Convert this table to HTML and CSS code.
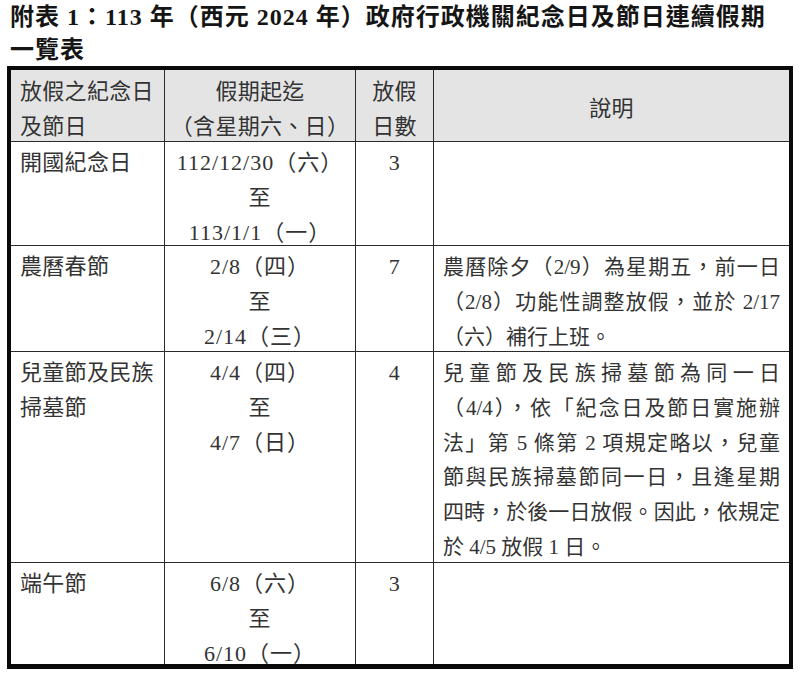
FILE: index.html
```html
<!DOCTYPE html>
<html lang="zh-Hant">
<head>
<meta charset="utf-8">
<title>附表1</title>
<link rel="stylesheet" href="styles.css">
</head>
<body>
<h1 class="title">附表 1：113 年（西元 2024 年）政府行政機關紀念日及節日連續假期<br>一覽表</h1>
<div class="sheet">
  <div class="cell head left">放假之紀念日<br>及節日</div>
  <div class="cell head center">假期起迄<br>（含星期六、日）</div>
  <div class="cell head center">放假<br>日數</div>
  <div class="cell head mid">說明</div>

  <div class="cell left">開國紀念日</div>
  <div class="cell center date">112/12/30（六）<br>至<br>113/1/1（一）</div>
  <div class="cell center">3</div>
  <div class="cell desc"></div>

  <div class="cell left">農曆春節</div>
  <div class="cell center date">2/8（四）<br>至<br>2/14（三）</div>
  <div class="cell center">7</div>
  <div class="cell desc">
    <span class="line just">農曆除夕（2/9）為星期五，前一日</span>
    <span class="line just">（2/8）功能性調整放假，並於 2/17</span>
    <span class="line">（六）補行上班。</span>
  </div>

  <div class="cell left">兒童節及民族<br>掃墓節</div>
  <div class="cell center date">4/4（四）<br>至<br>4/7（日）</div>
  <div class="cell center">4</div>
  <div class="cell desc">
    <span class="line just">兒童節及民族掃墓節為同一日</span>
    <span class="line just">（4/4），依「紀念日及節日實施辦</span>
    <span class="line just">法」第 5 條第 2 項規定略以，兒童</span>
    <span class="line just">節與民族掃墓節同一日，且逢星期</span>
    <span class="line just">四時，於後一日放假。因此，依規定</span>
    <span class="line">於 4/5 放假 1 日。</span>
  </div>

  <div class="cell left">端午節</div>
  <div class="cell center date">6/8（六）<br>至<br>6/10（一）</div>
  <div class="cell center">3</div>
  <div class="cell desc"></div>
</div>
</body>
</html>
```

FILE: styles.css
```css
html, body {
  background: #ffffff;
}

body {
  margin: 0;
  padding: 0 7px;
  font-family: "Liberation Serif", "Noto Sans CJK TC", serif;
  color: #333333;
}

.title {
  margin: 0;
  padding: 1px 0 0 3px;
  font-size: 24px;
  line-height: 33px;
  font-weight: 700;
  letter-spacing: 1px;
  color: #151515;
  white-space: nowrap;
}

.sheet {
  display: grid;
  grid-template-columns: 153px 190px 77px 355px;
  grid-template-rows: 71px 103px 105px 210px 101px;
  gap: 1px;
  width: max-content;
  margin-top: -1px;
  background: #2b2b2b;
  border: 4px solid #0a0a0a;
  border-bottom-width: 5px;
}

.cell {
  background: #ffffff;
  padding: 4px 9px 0;
  font-size: 22px;
  line-height: 34.8px;
  letter-spacing: 0.3px;
  overflow: visible;
}

.head {
  background: #e4e4e4;
  padding-top: 5px;
}

.left {
  text-align: left;
}

.center {
  text-align: center;
  padding-left: 2px;
  padding-right: 2px;
}

.date {
  letter-spacing: 1px;
}

.mid {
  display: flex;
  align-items: center;
  justify-content: center;
  padding-top: 8px;
}

.desc {
  padding-left: 9px;
  padding-right: 9px;
  font-size: 21px;
  letter-spacing: 0;
}

.line {
  display: block;
  text-align: left;
}

.just {
  text-align: justify;
  text-align-last: justify;
}
```
